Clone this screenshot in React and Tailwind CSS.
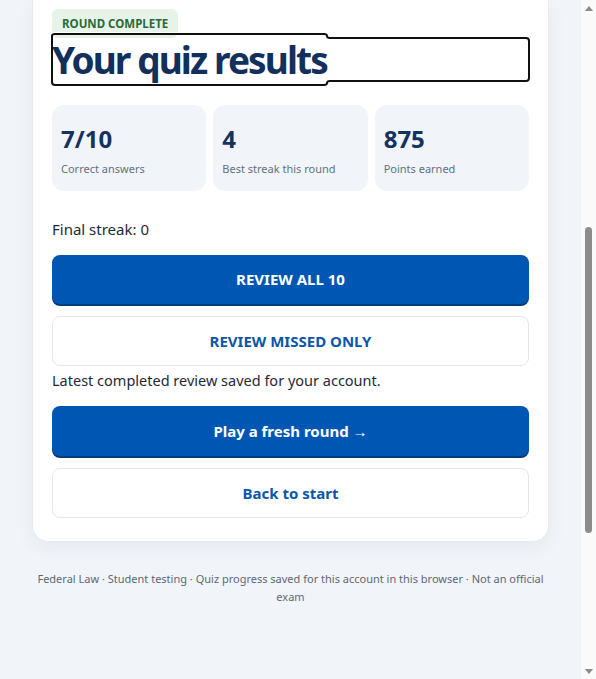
import React from 'react';

function Stat({ value, label }) {
  return (
    <div className="rounded-xl bg-[#f1f5fa] px-[9px] pt-[19px] pb-[14px]">
      <div className="text-[24px] leading-[30px] font-bold text-[#16325f]">{value}</div>
      <div className="mt-[7px] text-[11px] leading-[16px] text-[#647081]">{label}</div>
    </div>
  );
}

function Scrollbar() {
  return (
    <div className="w-[15px] shrink-0 bg-[#fafafa] flex flex-col items-center">
      <div className="h-[16px] flex items-center justify-center">
        <div className="w-0 h-0 border-l-[4px] border-r-[4px] border-b-[5px] border-l-transparent border-r-transparent border-b-[#8a8a8a]" />
      </div>
      <div className="mt-[211px] h-[306px] w-[7px] rounded-full bg-[#8c8c8c]" />
      <div className="flex-1" />
      <div className="h-[16px] flex items-center justify-center">
        <div className="w-0 h-0 border-l-[4px] border-r-[4px] border-t-[5px] border-l-transparent border-r-transparent border-t-[#8a8a8a]" />
      </div>
    </div>
  );
}

export default function App() {
  return (
    <div className="flex h-[679px] overflow-hidden bg-[#f1f5fa] font-['Noto_Sans',sans-serif]">
      <div className="flex-1 flex flex-col px-8">
        <div className="bg-white rounded-b-2xl border border-t-0 border-[#e6ebf1] shadow-[0_6px_20px_rgba(15,23,42,0.05)] px-[19px] pt-[9px] pb-[23px]">
          <span className="inline-flex h-[29px] items-center rounded-md bg-[#e7f3e9] px-[10px] text-[11.5px] font-bold text-[#2c6a37]">
            ROUND COMPLETE
          </span>
          <h1 className="text-[37px] leading-[43px] font-bold tracking-[-1.9px] text-[#132f5c] [outline:-webkit-focus-ring-color_auto_1px]">
            Your quiz results
          </h1>
          <div className="mt-[24px] grid grid-cols-3 gap-[7px]">
            <Stat value="7/10" label="Correct answers" />
            <Stat value="4" label="Best streak this round" />
            <Stat value="875" label="Points earned" />
          </div>
          <p className="mt-[27px] text-[15px] leading-[22px] text-[#1f2937]">Final streak: 0</p>
          <button className="mt-[15px] flex h-[49px] w-full items-center justify-center rounded-lg bg-[#0057b3] text-[15px] font-bold text-white shadow-[0_2px_0_#003b7a]">
            REVIEW ALL 10
          </button>
          <button className="mt-[12px] flex h-[50px] w-full items-center justify-center rounded-lg border border-[#e4e8ee] bg-white text-[15px] font-bold text-[#0a56ab]">
            REVIEW MISSED ONLY
          </button>
          <p className="mt-[3px] text-[14.5px] leading-[22px] text-[#1f2937]">Latest completed review saved for your account.</p>
          <button className="mt-[15px] flex h-[50px] w-full items-center justify-center rounded-lg bg-[#0057b3] text-[15px] font-bold text-white shadow-[0_2px_0_#003b7a]">
            Play a fresh round →
          </button>
          <button className="mt-[12px] flex h-[50px] w-full items-center justify-center rounded-lg border border-[#e4e8ee] bg-white text-[15px] font-bold text-[#0a56ab]">
            Back to start
          </button>
        </div>
        <p className="mt-[28px] text-center text-[11px] leading-[18px] text-[#5f6874]">
          Federal Law · Student testing · Quiz progress saved for this account in this browser · Not an official exam
        </p>
      </div>
      <Scrollbar />
    </div>
  );
}
